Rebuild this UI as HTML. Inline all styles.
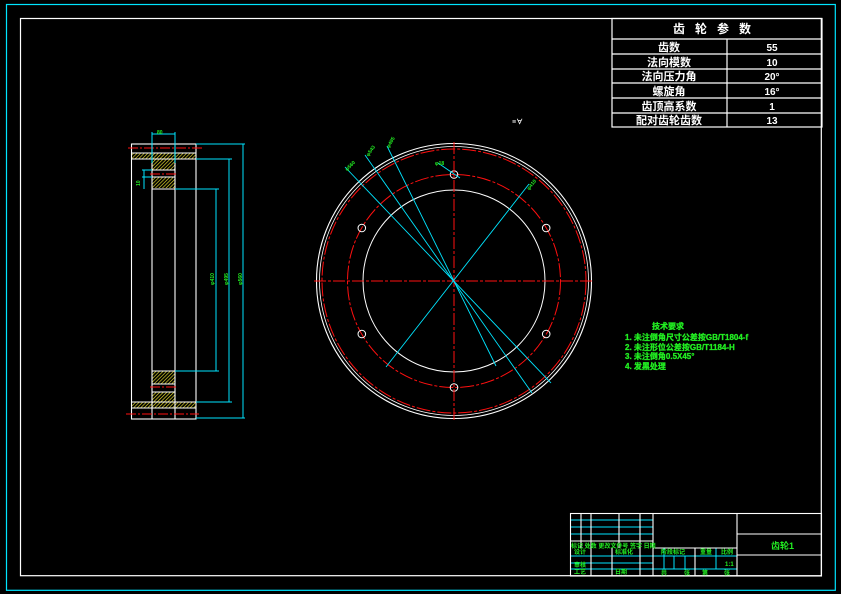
<!DOCTYPE html>
<html><head><meta charset="utf-8"><style>
html,body{margin:0;padding:0;background:#000;width:841px;height:594px;overflow:hidden}
svg{display:block}
text{font-family:"Liberation Sans","Noto Sans CJK SC","WenQuanYi Zen Hei",sans-serif;font-weight:bold}
</style></head><body>
<svg width="841" height="594" viewBox="0 0 841 594" xmlns="http://www.w3.org/2000/svg">
<defs>
<pattern id="h" width="2.5" height="2.5" patternUnits="userSpaceOnUse" patternTransform="rotate(45)">
<rect width="2.5" height="2.5" fill="#000"/><line x1="0" y1="0" x2="0" y2="2.5" stroke="#f0e830" stroke-width="1.3"/>
</pattern>
</defs>
<rect width="841" height="594" fill="#000"/>
<rect x="6.5" y="4.5" width="828.8" height="585.8" fill="none" stroke="#00e5ff" stroke-width="1.2"/>
<rect x="20.5" y="18.5" width="800.8" height="557.2" fill="none" stroke="#fff" stroke-width="1.2"/>

<g stroke="#fff" stroke-width="1.2" fill="none">
<rect x="612" y="18.5" width="210" height="108.5"/>
<line x1="612" y1="39" x2="822" y2="39"/>
<line x1="612" y1="54" x2="822" y2="54"/>
<line x1="612" y1="69" x2="822" y2="69"/>
<line x1="612" y1="83" x2="822" y2="83"/>
<line x1="612" y1="98" x2="822" y2="98"/>
<line x1="612" y1="113" x2="822" y2="113"/>
<line x1="727" y1="39" x2="727" y2="127"/>
</g>
<g fill="#fff" font-size="11" text-anchor="middle">
<text x="717" y="33" font-size="12" letter-spacing="10">齿轮参数</text>
<text x="669" y="51">齿数</text>
<text x="669" y="66">法向模数</text>
<text x="669" y="80">法向压力角</text>
<text x="669" y="95">螺旋角</text>
<text x="669" y="110">齿顶高系数</text>
<text x="669" y="124">配对齿轮齿数</text>
<text x="772" y="51" font-size="10">55</text>
<text x="772" y="66" font-size="10">10</text>
<text x="772" y="80" font-size="10">20°</text>
<text x="772" y="95" font-size="10">16°</text>
<text x="772" y="110" font-size="10">1</text>
<text x="772" y="124" font-size="10">13</text>
</g>
<text x="512" y="124" fill="#fff" font-size="7">≡∀</text>

<g>
<rect x="131" y="153" width="65" height="6" fill="url(#h)"/>
<rect x="152" y="153" width="23" height="17" fill="url(#h)"/>
<rect x="152" y="177" width="23" height="11" fill="url(#h)"/>
<rect x="152" y="371" width="23" height="13" fill="url(#h)"/>
<rect x="152" y="392" width="23" height="16" fill="url(#h)"/>
<rect x="131" y="402" width="65" height="6" fill="url(#h)"/>
</g>
<g stroke="#fff" stroke-width="1.1" fill="none">
<rect x="131.5" y="144" width="64.5" height="275"/>
<line x1="152" y1="144" x2="152" y2="419"/>
<line x1="175" y1="144" x2="175" y2="419"/>
<line x1="131" y1="153" x2="196" y2="153"/>
<line x1="131" y1="159" x2="196" y2="159"/>
<line x1="152" y1="170" x2="175" y2="170"/>
<line x1="152" y1="177" x2="175" y2="177"/>
<line x1="152" y1="189" x2="176" y2="189"/>
<line x1="152" y1="371" x2="175" y2="371"/>
<line x1="152" y1="384" x2="175" y2="384"/>
<line x1="152" y1="392" x2="175" y2="392"/>
<line x1="131" y1="402" x2="196" y2="402"/>
<line x1="131" y1="408" x2="196" y2="408"/>
</g>
<g stroke="#ff1010" stroke-width="1" stroke-dasharray="10,2,2,2">
<line x1="128" y1="148" x2="202" y2="148"/>
<line x1="150" y1="174" x2="178" y2="174"/>
<line x1="150" y1="387" x2="178" y2="387"/>
<line x1="126" y1="414" x2="199" y2="414"/>
</g>
<g stroke="#00e5ff" stroke-width="1" fill="none">
<line x1="152" y1="132" x2="152" y2="163"/>
<line x1="175" y1="132" x2="175" y2="163"/>
<line x1="152" y1="134" x2="175" y2="134"/>
<line x1="196" y1="144" x2="245" y2="144"/>
<line x1="243" y1="144" x2="243" y2="418"/>
<line x1="196" y1="418" x2="245" y2="418"/>
<line x1="196" y1="159" x2="232" y2="159"/>
<line x1="229" y1="159" x2="229" y2="402"/>
<line x1="196" y1="402" x2="232" y2="402"/>
<line x1="175" y1="189" x2="219" y2="189"/>
<line x1="216" y1="189" x2="216" y2="371"/>
<line x1="175" y1="371" x2="219" y2="371"/>
<line x1="142" y1="170" x2="152" y2="170"/>
<line x1="142" y1="177" x2="152" y2="177"/>
<line x1="144" y1="170" x2="144" y2="189"/>
</g>
<g fill="#22ee22" font-size="5">
<text x="157" y="134">80</text>
<text x="140" y="186" transform="rotate(-90 140 186)">10</text>
<text x="214" y="285" transform="rotate(-90 214 285)">φ410</text>
<text x="228" y="285" transform="rotate(-90 228 285)">φ495</text>
<text x="242" y="285" transform="rotate(-90 242 285)">φ560</text>
</g>

<g fill="none">
<circle cx="454" cy="281" r="137.5" stroke="#fff" stroke-width="1.1"/>
<circle cx="454" cy="281" r="134.5" stroke="#fff" stroke-width="0.8"/>
<circle cx="454" cy="281" r="132" stroke="#ff1010" stroke-width="1" stroke-dasharray="14,2,3,2"/>
<circle cx="454" cy="281" r="106.5" stroke="#ff1010" stroke-width="1" stroke-dasharray="14,2,3,2"/>
<circle cx="454" cy="281" r="91" stroke="#fff" stroke-width="1"/>
<g stroke="#fff" stroke-width="1">
<circle cx="454" cy="174.5" r="3.8"/>
<circle cx="454" cy="387.5" r="3.8"/>
<circle cx="361.8" cy="228" r="3.8"/>
<circle cx="546.2" cy="228" r="3.8"/>
<circle cx="361.8" cy="334" r="3.8"/>
<circle cx="546.2" cy="334" r="3.8"/>
</g>
</g>
<g stroke="#ff1010" stroke-width="1" stroke-dasharray="12,2,3,2">
<line x1="454" y1="142" x2="454" y2="422"/>
<line x1="314" y1="281" x2="594" y2="281"/>
</g>
<g stroke="#00e5ff" stroke-width="0.9">
<line x1="345" y1="167" x2="551" y2="383"/>
<line x1="365" y1="155" x2="532" y2="393"/>
<line x1="387" y1="146" x2="496" y2="366"/>
<line x1="438" y1="163" x2="460" y2="178"/>
<line x1="529" y1="184" x2="386" y2="367"/>
</g>
<g fill="#22ee22" font-size="5">
<text x="344" y="170" transform="rotate(-45 347 167)">φ560</text>
<text x="366" y="158" transform="rotate(-55 366 155)">φ543</text>
<text x="386" y="149" transform="rotate(-60 387 146)">φ495</text>
<text x="435" y="165">φ18</text>
<text x="524" y="188" transform="rotate(-52 529 184)">φ410</text>
</g>

<g fill="#22ee22" font-size="8" stroke="#22ee22" stroke-width="0.3">
<text x="652" y="329">技术要求</text>
<text x="625" y="340">1. 未注倒角尺寸公差按GB/T1804-f</text>
<text x="625" y="350">2. 未注形位公差按GB/T1184-H</text>
<text x="625" y="359">3. 未注倒角0.5X45°</text>
<text x="625" y="369">4. 发黑处理</text>
</g>

<g stroke="#00e5ff" stroke-width="1">
<line x1="570" y1="520" x2="653" y2="520"/>
<line x1="570" y1="527" x2="653" y2="527"/>
<line x1="570" y1="534" x2="653" y2="534"/>
<line x1="570" y1="556" x2="737" y2="556"/>
<line x1="570" y1="563" x2="653" y2="563"/>
<line x1="570" y1="569" x2="737" y2="569"/>
<line x1="664" y1="548" x2="664" y2="569"/>
<line x1="674" y1="556" x2="674" y2="569"/>
<line x1="685" y1="556" x2="685" y2="569"/>
<line x1="716" y1="548" x2="716" y2="569"/>
</g>
<g stroke="#fff" stroke-width="1.1" fill="none">
<rect x="570.5" y="513.5" width="251" height="62.5"/>
<line x1="653" y1="513" x2="653" y2="576"/>
<line x1="737" y1="513" x2="737" y2="576"/>
<line x1="737" y1="534" x2="822" y2="534"/>
<line x1="737" y1="555" x2="822" y2="555"/>
<line x1="570" y1="541" x2="653" y2="541"/>
<line x1="653" y1="548" x2="737" y2="548"/>
<line x1="581" y1="513" x2="581" y2="548"/>
<line x1="591" y1="513" x2="591" y2="576"/>
<line x1="619" y1="513" x2="619" y2="548"/>
<line x1="640" y1="513" x2="640" y2="576"/>
<line x1="612" y1="548" x2="612" y2="576"/>
<line x1="695" y1="548" x2="695" y2="576"/>
</g>
<g fill="#22ee22" font-size="6">
<text x="571" y="548">标记 处数 更改文件号 签字 日期</text>
<text x="574" y="554">设计</text>
<text x="615" y="554">标准化</text>
<text x="574" y="567">审核</text>
<text x="574" y="574">工艺</text>
<text x="615" y="574">日期</text>
<text x="661" y="554">阶段标记</text>
<text x="700" y="554">重量</text>
<text x="721" y="554">比例</text>
<text x="725" y="566">1:1</text>
<text x="661" y="575">共</text>
<text x="684" y="575">张</text>
<text x="702" y="575">第</text>
<text x="724" y="575">张</text>
<text x="771" y="549" font-size="9">齿轮1</text>
</g>
</svg>
</body></html>
